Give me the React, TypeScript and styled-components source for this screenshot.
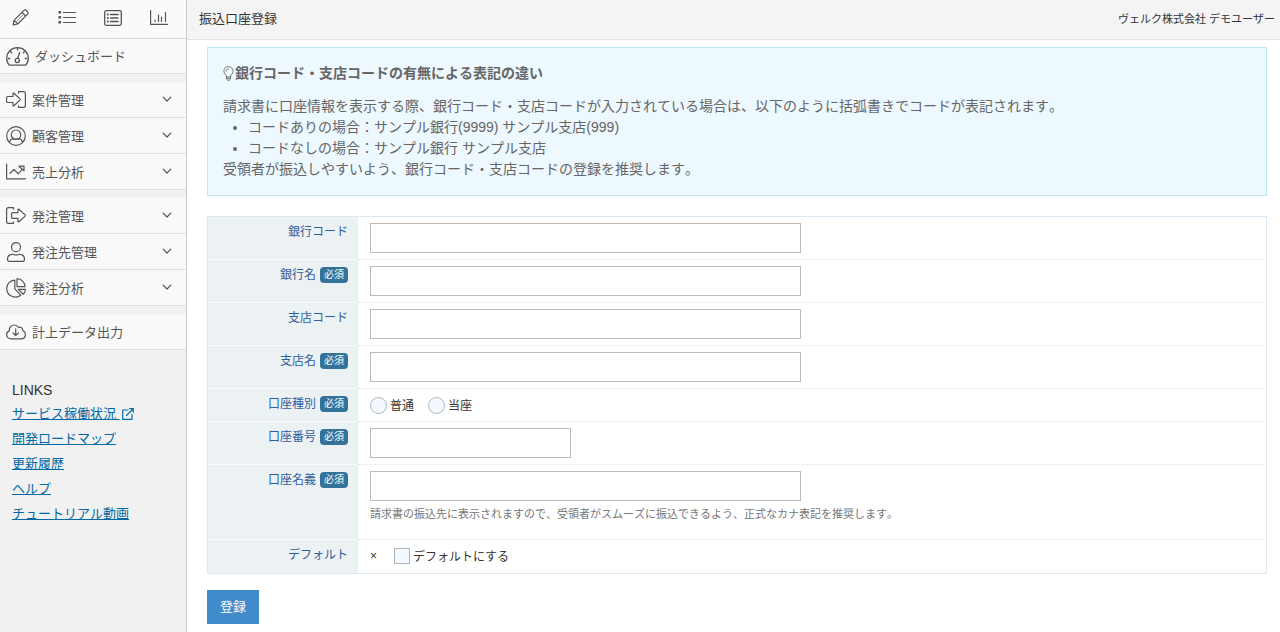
import React from "react";
import styled, { createGlobalStyle } from "styled-components";

const GlobalStyle = createGlobalStyle`
  *, *::before, *::after { box-sizing: border-box; }
  body {
    margin: 0;
    background: #fff;
    color: #333;
    font-family: "Liberation Sans", "Noto Sans CJK JP", sans-serif;
    font-size: 12px;
    line-height: 18px;
    font-kerning: none;
    text-rendering: optimizeSpeed;
  }
  button, input { font: inherit; }
`;

const Shell = styled.div`
  display: grid;
  grid-template-columns: 187px minmax(0, 1fr);
  min-height: 100vh;
`;

/* ---------- Sidebar ---------- */

const Sidebar = styled.aside`
  background: #f1f1f1;
  border-right: 1px solid #ccc;
`;

const Shortcuts = styled.div`
  display: grid;
  grid-template-columns: repeat(4, 1fr);
  height: 39px;
  padding-right: 2px;
  background: #fafafa;
  border-bottom: 1px solid #d8d8d8;
`;

const ShortcutButton = styled.button`
  display: flex;
  align-items: center;
  padding: 0 0 3px 12px;
  border: 0;
  background: none;
  color: #555;
  cursor: pointer;
`;

const NavGroup = styled.ul`
  margin: 0 0 8px;
  padding: 0;
  list-style: none;
`;

const NavLink = styled.a<{ $compact?: boolean }>`
  display: flex;
  align-items: center;
  gap: 6px;
  height: ${(p) => (p.$compact ? 35 : 36)}px;
  padding: 0 14px 0 6px;
  background: #f9f9f9;
  border-bottom: 1px solid #e0e0e0;
  color: #555;
  font-size: 13px;
  line-height: 20px;
  text-decoration: none;
`;

const NavText = styled.span`
  flex: 1;
  padding-top: 2px;
`;

const Links = styled.section`
  padding: 22px 12px;
  font-size: 13px;
  line-height: 20px;
`;

const LinksTitle = styled.h2`
  margin: 0 0 4px;
  font-size: 14px;
  font-weight: normal;
  line-height: 20px;
`;

const LinkList = styled.ul`
  display: grid;
  gap: 5px;
  margin: 0;
  padding: 0;
  list-style: none;
`;

const TextLink = styled.a`
  color: #0069a6;
  text-decoration: underline;
  svg {
    margin-left: 2px;
    vertical-align: -2px;
  }
`;

/* ---------- Content ---------- */

const Content = styled.div`
  min-width: 0;
`;

const Header = styled.header`
  display: flex;
  align-items: center;
  justify-content: space-between;
  height: 40px;
  padding: 0 5px 2px 12px;
  background: #f4f4f4;
  border-bottom: 1px solid #e3e3e3;
`;

const PageTitle = styled.h1`
  margin: 0;
  font-size: 13px;
  font-weight: normal;
  line-height: 20px;
`;

const Account = styled.span`
  font-size: 11px;
`;

const Main = styled.main`
  padding: 7px 13px 8px 20px;
`;

const Notice = styled.section`
  padding: 15px;
  border: 1px solid #bce8f1;
  background: #edf8ff;
  color: #666;
  font-size: 14px;
  line-height: 21px;
`;

const NoticeTitle = styled.h2`
  display: flex;
  align-items: center;
  gap: 1px;
  margin: 0 0 12px;
  font-size: 14px;
  line-height: 21px;
`;

const NoticeText = styled.p`
  margin: 0;
`;

const NoticeList = styled.ul`
  margin: 0;
  padding-left: 25px;
`;

const FieldGrid = styled.div`
  margin: 20px 0 16px;
  border: 1px solid #dce9f3;
`;

const Row = styled.div`
  display: grid;
  grid-template-columns: 150px minmax(0, 1fr);
`;

const Caption = styled.div`
  display: flex;
  align-items: flex-start;
  justify-content: flex-end;
  gap: 4px;
  padding: 6px 10px;
  background: #ecf1f4;
  border-bottom: 1px solid #f8fbfd;
  color: #2f5e9e;
  ${Row}:last-child & { border-bottom-color: transparent; }
`;

const Required = styled.span`
  margin-top: 1px;
  padding: 0 4px;
  border-radius: 4px;
  background: #337399;
  color: #fff;
  font-size: 10px;
  line-height: 16px;
`;

const Cell = styled.div`
  padding: 6px 12px;
  border-bottom: 1px dotted #d8e5f0;
  ${Row}:last-child & { border-bottom-color: transparent; }
`;

const TextInput = styled.input<{ $short?: boolean }>`
  display: block;
  width: ${(p) => (p.$short ? 201 : 431)}px;
  max-width: 100%;
  height: 30px;
  padding: 4px 6px;
  border: 1px solid #bbb;
  border-radius: 0;
  background: #fff;
`;

const Hint = styled.p`
  margin: 4px 0 10px;
  color: #777;
  font-size: 11px;
`;

const Options = styled.div`
  display: flex;
  align-items: center;
  gap: 14px;
  height: 20px;
`;

const Mark = styled.span`
  width: 10px;
`;

const Choice = styled.label`
  display: flex;
  align-items: center;
  gap: 3px;
`;

const ChoiceText = styled.span`
  padding-top: 2px;
`;

const Radio = styled.input.attrs({ type: "radio" })`
  appearance: none;
  width: 17px;
  height: 17px;
  margin: 0;
  border: 1px solid #aab7c0;
  border-radius: 50%;
  background: #f4f8ff;
  &:checked { box-shadow: inset 0 0 0 4px #f4f8ff; background: #337399; }
`;

const Checkbox = styled.input.attrs({ type: "checkbox" })`
  appearance: none;
  width: 16px;
  height: 16px;
  margin: 0;
  border: 1px solid #aab7c0;
  background: #f4f8ff;
  &:checked { box-shadow: inset 0 0 0 3px #f4f8ff; background: #337399; }
`;

const SubmitButton = styled.button`
  height: 34px;
  padding: 0 13px;
  border: 0;
  background: #428bca;
  color: #fff;
  font-size: 13px;
  line-height: 20px;
  cursor: pointer;
`;

/* ---------- Icons ---------- */

type IconProps = { w: number; h: number; sw?: number; children: React.ReactNode };

const Icon = ({ w, h, sw = 1.2, children }: IconProps) => (
  <svg
    width={w}
    height={h}
    viewBox={`0 0 ${w} ${h}`}
    fill="none"
    stroke="currentColor"
    strokeWidth={sw}
    strokeLinecap="round"
    strokeLinejoin="round"
    aria-hidden="true"
  >
    {children}
  </svg>
);

const PencilIcon = () => (
  <Icon w={17} h={17} sw={1.2}>
    <path d="M1.200 15.800l.8-4.500 9.700-9.700a2 2 0 0 1 2.800 0l.9.9a2 2 0 0 1 0 2.800L5.700 15l-4.500.8zM10 3.300L13.700 7M2.200 11.300l3.500 3.500" />
    <path d="M4.800 12.200l6.500-6.500" strokeWidth="0.7" />
  </Icon>
);

const ListIcon = () => (
  <Icon w={18} h={15}>
    <path d="M5.500 2.500h12M5.500 7.500h12M5.500 12.500h12" />
    <path d="M1 1.500h1.500V3H1zM1 6.500h1.500V8H1zM1 11.500h1.500V13H1z" fill="currentColor" />
  </Icon>
);

const ListBoxIcon = () => (
  <Icon w={18} h={16} sw={1.3}>
    <rect x="0.7" y="0.7" width="16.6" height="14.6" rx="1.5" />
    <path d="M6.500 4.500h7.500M6.500 8h7.500M6.500 11.500h7.500" />
    <path d="M3.500 4.200h.6v.6h-.6zM3.500 7.700h.6v.6h-.6zM3.500 11.200h.6v.6h-.6z" fill="currentColor" />
  </Icon>
);

const BarsIcon = () => (
  <Icon w={18} h={15}>
    <path d="M.6.600v13.800h16.900M5 11.500V10M8.500 11.500V5M11.500 11.500V7M15.500 11.500V2.500" />
  </Icon>
);

const GaugeIcon = () => (
  <Icon w={23} h={19} sw={1.3}>
    <path d="M3.500 18.200C1.500 16.400.7 14.200.7 11.500.7 5.300 5.500.7 11.500.7s10.800 4.600 10.800 10.800c0 2.700-.8 4.900-2.800 6.700z" />
    <circle cx="11.3" cy="13.5" r="2.1" />
    <path d="M11.700 11.300L13.700 5.500M11.500 1v1.800M4.700 4.800l1 1M18.300 4.800l-1 1M2.500 11.500h1.300M19.200 11.500h1.300" />
  </Icon>
);

const EnterIcon = () => (
  <Icon w={20} h={17}>
    <path d="M1.500 5.500H7V2.700q0-1.200.9-.4l6 5.600q.6.600 0 1.200l-6 5.600q-.9.800-.9-.4v-2.800H1.500q-.9 0-.9-.9V6.400q0-.9.9-.9z" />
    <path d="M12.500 2.200V.7h5q1.900 0 1.900 1.900v11.800q0 1.900-1.900 1.900h-5v-1.500" />
  </Icon>
);

const ExitIcon = () => (
  <Icon w={20} h={17}>
    <path d="M6.500 5.700H12V2.700q0-1.200.9-.4l6.200 5.600q.6.600 0 1.200l-6.200 5.600q-.9.800-.9-.4v-3H6.500q-.9 0-.9-.9V6.600q0-.9.9-.9z" />
    <path d="M7.500 2.200V.7h-5Q.6.700.6 2.600v11.800q0 1.900 1.900 1.900h5v-1.500" />
  </Icon>
);

const UserCircleIcon = () => (
  <Icon w={20} h={20}>
    <circle cx="10" cy="10" r="9.3" />
    <circle cx="10" cy="8.7" r="4.7" />
    <path d="M3.500 16.500c.4-2.500 1.500-3.700 3.500-3.900 2 .9 4 .9 6 0 2 .2 3.100 1.400 3.500 3.900" />
  </Icon>
);

const UserIcon = () => (
  <Icon w={20} h={20}>
    <circle cx="10" cy="5.2" r="4.5" />
    <path d="M6.200 12.300c2.500 1 5.100 1 7.600 0 3.100 0 4.700 2.200 4.700 5.200 0 1.200-.8 1.900-2 1.900h-13c-1.200 0-2-.7-2-1.900 0-3 1.600-5.200 4.700-5.200z" />
  </Icon>
);

const TrendIcon = () => (
  <Icon w={20} h={17}>
    <path d="M.6 1v14.800h18.800M4 10.300l4-3.800 4.300 4.300 4-4.600M13 3.200h5v4.600z" />
  </Icon>
);

const PieIcon = () => (
  <Icon w={20} h={20}>
    <path d="M8.800 2.200v8.600l6 6.400C9.500 21.500.7 18 .7 10.500.7 5.800 4.200 2.500 8.800 2.200z" />
    <path d="M11 .7v8h8C19 4.300 15.400.7 11 .7zM12.300 11.300h7.100c0 2.100-.8 3.700-2.100 4.900z" />
  </Icon>
);

const CloudIcon = () => (
  <Icon w={20} h={16}>
    <path d="M5 14.800c-2.500 0-4.400-1.700-4.400-4 0-2 1.100-3.400 2.700-3.900C3 3.400 5.300 1 8.200 1c2 0 3.500 1 4.400 2.500 2-.9 4.300.4 4.100 3 1.700.6 2.700 2 2.700 3.900 0 2.600-1.900 4.400-4.400 4.400z" />
    <path d="M9.700 4.800v6.500M7 9l2.700 2.500L12.400 9" />
  </Icon>
);

const ChevronIcon = () => (
  <Icon w={10} h={8} sw={1.2}>
    <path d="M1.200 1.200L5 5l3.800-3.800" />
  </Icon>
);

const ExternalIcon = () => (
  <Icon w={12} h={12}>
    <path d="M6 2H.7v9.300H10V6.500M4.500 7.500L11 1M7.700.700h3.600v3.600" />
  </Icon>
);

const BulbIcon = () => (
  <Icon w={11} h={15} sw={0.9}>
    <path d="M3.600 10.500C3.400 8.700.9 7.800.9 5.200.9 2.600 2.900.7 5.500.7s4.600 1.900 4.600 4.500c0 2.600-2.500 3.500-2.700 5.300zM3.600 10.500v2.300l1 1.500h1.800l1-1.500v-2.300M3.600 12.400h3.800M3.200 5.300C3.200 4 4.100 3.100 5.400 3.100" />
  </Icon>
);

/* ---------- Page ---------- */

type NavEntry = { label: string; icon: React.ReactNode; leaf?: boolean };

const navGroups: NavEntry[][] = [
  [
    { label: "案件管理", icon: <EnterIcon /> },
    { label: "顧客管理", icon: <UserCircleIcon /> },
    { label: "売上分析", icon: <TrendIcon /> },
  ],
  [
    { label: "発注管理", icon: <ExitIcon /> },
    { label: "発注先管理", icon: <UserIcon /> },
    { label: "発注分析", icon: <PieIcon /> },
  ],
  [{ label: "計上データ出力", icon: <CloudIcon />, leaf: true }],
];

type FieldProps = {
  label: string;
  id?: string;
  required?: boolean;
  children: React.ReactNode;
};

const Field = ({ label, id, required, children }: FieldProps) => (
  <Row role={id ? undefined : "group"} aria-label={id ? undefined : label}>
    <Caption>
      {id ? <label htmlFor={id}>{label}</label> : <span>{label}</span>}
      {required && <Required>必須</Required>}
    </Caption>
    <Cell>{children}</Cell>
  </Row>
);

export default function App() {
  return (
    <>
      <GlobalStyle />
      <Shell>
        <Sidebar>
          <Shortcuts>
            <ShortcutButton aria-label="編集"><PencilIcon /></ShortcutButton>
            <ShortcutButton aria-label="一覧"><ListIcon /></ShortcutButton>
            <ShortcutButton aria-label="明細"><ListBoxIcon /></ShortcutButton>
            <ShortcutButton aria-label="グラフ"><BarsIcon /></ShortcutButton>
          </Shortcuts>
          <nav>
            <NavGroup>
              <li>
                <NavLink href="#" $compact>
                  <GaugeIcon />
                  <NavText>ダッシュボード</NavText>
                </NavLink>
              </li>
            </NavGroup>
            {navGroups.map((group) => (
              <NavGroup key={group[0].label}>
                {group.map((entry) => (
                  <li key={entry.label}>
                    <NavLink href="#">
                      {entry.icon}
                      <NavText>{entry.label}</NavText>
                      {!entry.leaf && <ChevronIcon />}
                    </NavLink>
                  </li>
                ))}
              </NavGroup>
            ))}
          </nav>
          <Links>
            <LinksTitle>LINKS</LinksTitle>
            <LinkList>
              <li><TextLink href="#">サービス稼働状況 <ExternalIcon /></TextLink></li>
              <li><TextLink href="#">開発ロードマップ</TextLink></li>
              <li><TextLink href="#">更新履歴</TextLink></li>
              <li><TextLink href="#">ヘルプ</TextLink></li>
              <li><TextLink href="#">チュートリアル動画</TextLink></li>
            </LinkList>
          </Links>
        </Sidebar>
        <Content>
          <Header>
            <PageTitle>振込口座登録</PageTitle>
            <Account>ヴェルク株式会社 デモユーザー</Account>
          </Header>
          <Main>
            <Notice>
              <NoticeTitle><BulbIcon />銀行コード・支店コードの有無による表記の違い</NoticeTitle>
              <NoticeText>請求書に口座情報を表示する際、銀行コード・支店コードが入力されている場合は、以下のように括弧書きでコードが表記されます。</NoticeText>
              <NoticeList>
                <li>コードありの場合：サンプル銀行(9999) サンプル支店(999)</li>
                <li>コードなしの場合：サンプル銀行 サンプル支店</li>
              </NoticeList>
              <NoticeText>受領者が振込しやすいよう、銀行コード・支店コードの登録を推奨します。</NoticeText>
            </Notice>
            <form onSubmit={(e) => e.preventDefault()}>
              <FieldGrid>
                <Field label="銀行コード" id="bank-code"><TextInput id="bank-code" /></Field>
                <Field label="銀行名" id="bank-name" required><TextInput id="bank-name" /></Field>
                <Field label="支店コード" id="branch-code"><TextInput id="branch-code" /></Field>
                <Field label="支店名" id="branch-name" required><TextInput id="branch-name" /></Field>
                <Field label="口座種別" required>
                  <Options>
                    <Choice><Radio name="account-type" value="ordinary" /><ChoiceText>普通</ChoiceText></Choice>
                    <Choice><Radio name="account-type" value="current" /><ChoiceText>当座</ChoiceText></Choice>
                  </Options>
                </Field>
                <Field label="口座番号" id="account-number" required><TextInput id="account-number" $short /></Field>
                <Field label="口座名義" id="account-holder" required>
                  <TextInput id="account-holder" />
                  <Hint>請求書の振込先に表示されますので、受領者がスムーズに振込できるよう、正式なカナ表記を推奨します。</Hint>
                </Field>
                <Field label="デフォルト">
                  <Options>
                    <Mark>×</Mark>
                    <Choice><Checkbox /><ChoiceText>デフォルトにする</ChoiceText></Choice>
                  </Options>
                </Field>
              </FieldGrid>
              <SubmitButton type="submit">登録</SubmitButton>
            </form>
          </Main>
        </Content>
      </Shell>
    </>
  );
}
